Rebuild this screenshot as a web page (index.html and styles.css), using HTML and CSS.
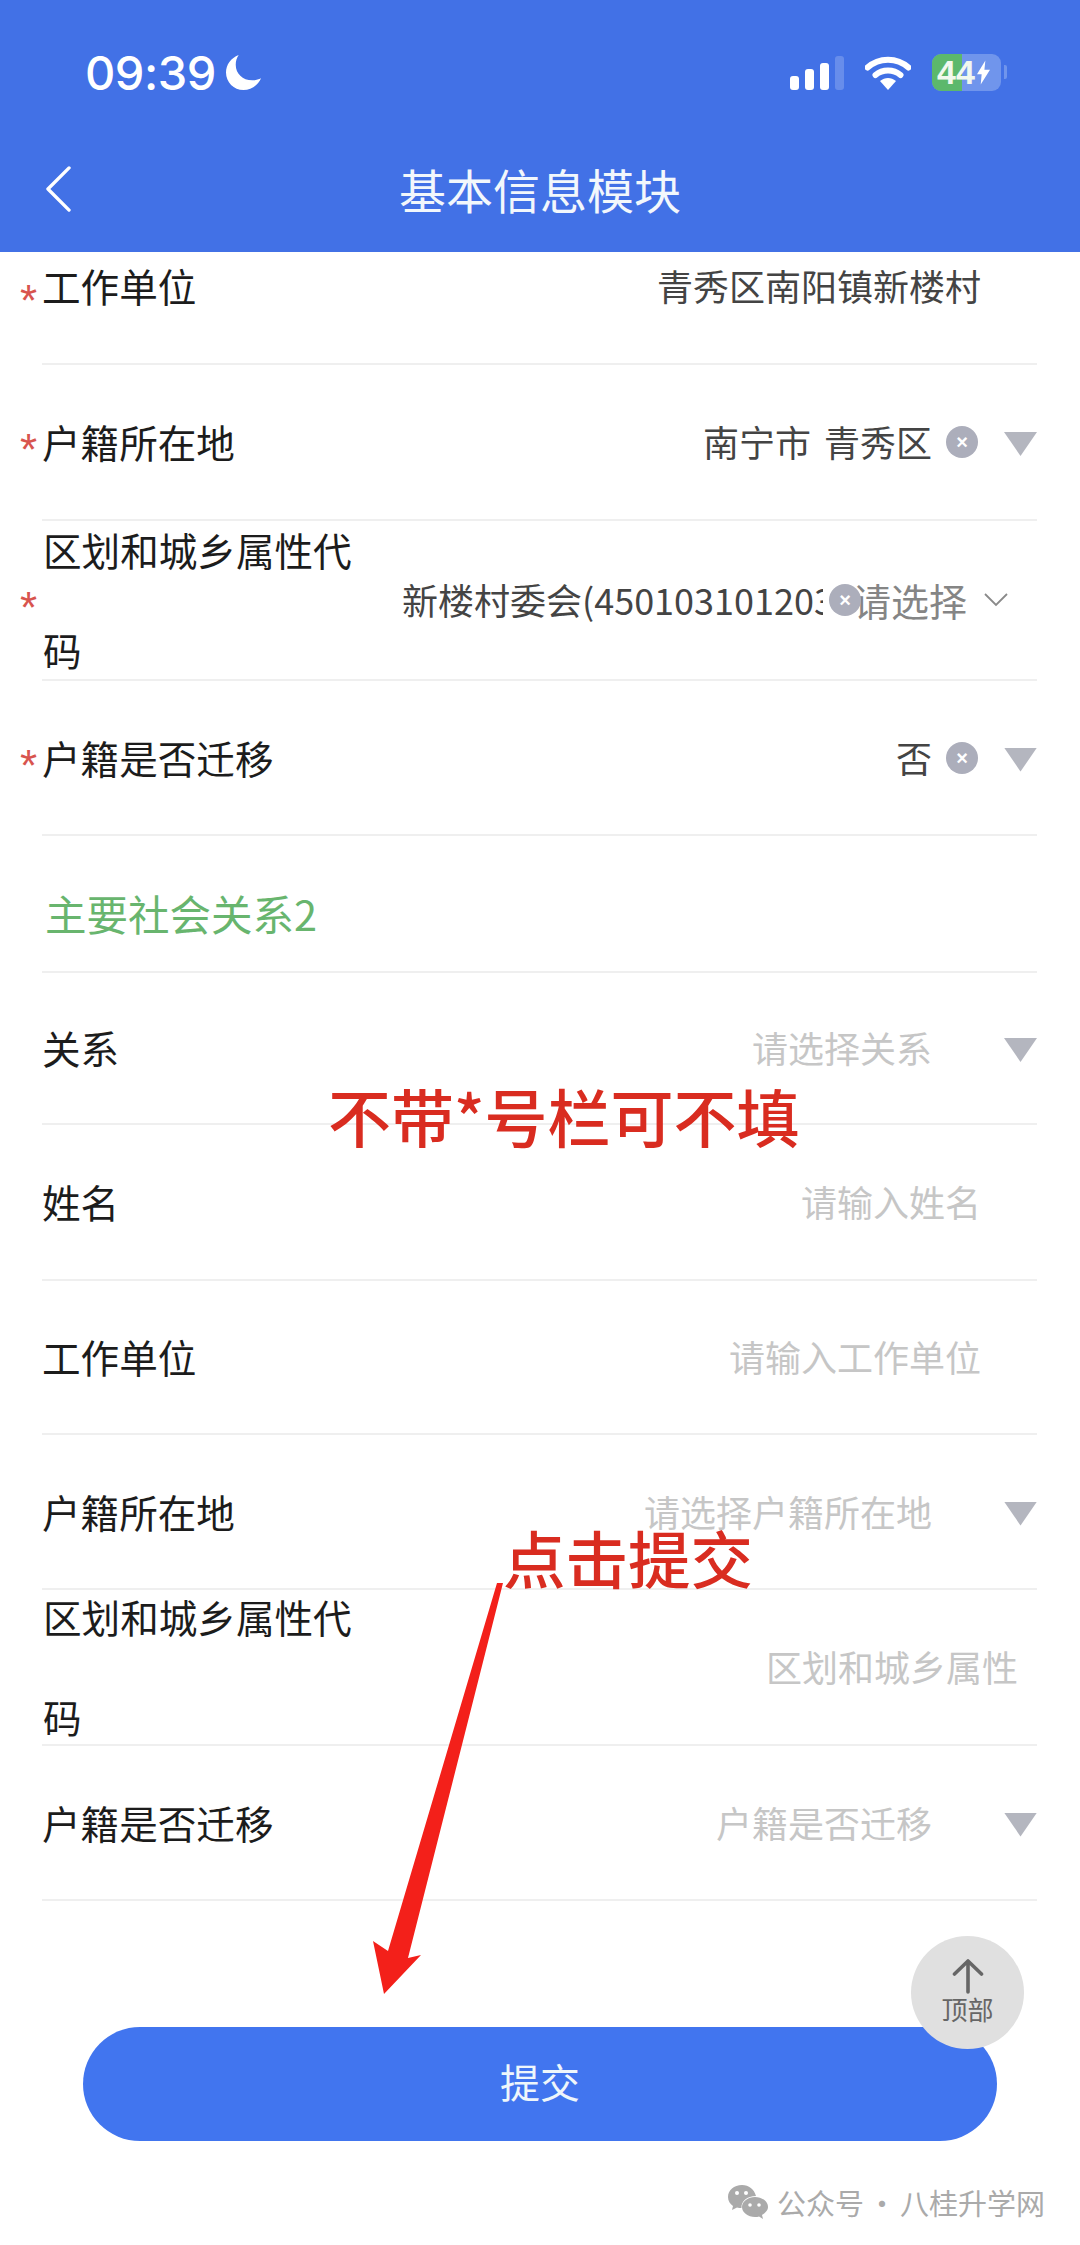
FILE: index.html
```html
<!DOCTYPE html>
<html lang="zh">
<head>
<meta charset="utf-8">
<title>基本信息模块</title>
<link rel="stylesheet" href="styles.css">
</head>
<body>
<div class="page">
  <header class="header">
    <div class="status">
      <div class="status-left">
        <span class="time">09:39</span>
        <svg class="moon" viewBox="0 0 38 38"><path d="M13 1C5 4 0 11 0 19c0 10 8 18 18 18 8 0 15-5 18-12-3 1.500-6 2-9 2C17 27 10 20 10 11c0-4 1-7 3-10z" fill="#fff"/></svg>
      </div>
      <div class="status-right">
        <svg class="signal" viewBox="0 0 54 34"><rect x="0" y="20" width="9" height="14" rx="3" fill="#fff"/><rect x="15" y="13" width="9" height="21" rx="3" fill="#fff"/><rect x="30" y="7" width="9" height="27" rx="3" fill="#fff"/><rect x="45" y="0" width="9" height="34" rx="3" fill="#fff" fill-opacity=".2"/></svg>
        <svg class="wifi" viewBox="0 0 46 34"><path d="M2.500 11.500C14 1 32 1 43.500 11.500" fill="none" stroke="#fff" stroke-width="6" stroke-linecap="round"/><path d="M10.500 19c7-6 18-6 25 0" fill="none" stroke="#fff" stroke-width="6" stroke-linecap="round"/><path d="M15 25c5-4 11-4 16 0l-8 9z" fill="#fff"/></svg>
        <div class="battery">
          <span class="battery-fill"></span>
          <span class="battery-text">44</span>
          <svg class="bolt" viewBox="0 0 14 26"><path d="M9 0 0 15h5l-1 11 10-16H8z" fill="#fff"/></svg>
        </div>
        <span class="battery-tip"></span>
      </div>
    </div>
    <nav class="nav">
      <svg class="back" viewBox="0 0 28 48"><path d="M25 2 3 24l22 22" fill="none" stroke="#fff" stroke-width="3.500" stroke-linecap="round" stroke-linejoin="round"/></svg>
      <h1 class="title">基本信息模块</h1>
      <span></span>
    </nav>
  </header>

  <main class="form">
    <div class="row row-first">
      <span class="star star-first">*</span>
      <div class="body body-first">
        <span class="label">工作单位</span>
        <span class="value value-plain">青秀区南阳镇新楼村</span>
      </div>
    </div>
    <div class="row row-156">
      <span class="star">*</span>
      <div class="body">
        <span class="label">户籍所在地</span>
        <span class="value">南宁市 青秀区</span>
        <span class="clear"><i class="clear-x">×</i></span>
        <span class="tri"></span>
      </div>
    </div>
    <div class="row row-160">
      <span class="star">*</span>
      <div class="body">
        <span class="label label-wrap">区划和城乡属性代码</span>
        <span class="value value-clip">新楼村委会(450103101203)</span>
        <span class="clear clear-over"><i class="clear-x">×</i></span>
        <span class="select-hint">请选择</span>
        <svg class="chevron" viewBox="0 0 24 14"><path d="M1 1l11 11L23 1" fill="none" stroke="#8a8a8a" stroke-width="1.800"/></svg>
      </div>
    </div>
    <div class="row row-155">
      <span class="star">*</span>
      <div class="body">
        <span class="label">户籍是否迁移</span>
        <span class="value">否</span>
        <span class="clear"><i class="clear-x">×</i></span>
        <span class="tri"></span>
      </div>
    </div>
    <div class="row row-section">
      <span class="star"></span>
      <div class="body body-section"><span class="section">主要社会关系2</span></div>
    </div>
    <div class="row row-152">
      <span class="star"></span>
      <div class="body">
        <span class="label">关系</span>
        <span class="value placeholder">请选择关系</span>
        <span class="tri tri-wide"></span>
      </div>
    </div>
    <div class="row row-156">
      <span class="star"></span>
      <div class="body">
        <span class="label">姓名</span>
        <span class="value value-plain placeholder">请输入姓名</span>
      </div>
    </div>
    <div class="row row-154">
      <span class="star"></span>
      <div class="body">
        <span class="label">工作单位</span>
        <span class="value value-plain placeholder">请输入工作单位</span>
      </div>
    </div>
    <div class="row row-155">
      <span class="star"></span>
      <div class="body">
        <span class="label">户籍所在地</span>
        <span class="value placeholder">请选择户籍所在地</span>
        <span class="tri tri-wide"></span>
      </div>
    </div>
    <div class="row row-156">
      <span class="star"></span>
      <div class="body">
        <span class="label label-wrap">区划和城乡属性代码</span>
        <span class="value value-near placeholder">区划和城乡属性</span>
      </div>
    </div>
    <div class="row row-155">
      <span class="star"></span>
      <div class="body">
        <span class="label">户籍是否迁移</span>
        <span class="value placeholder">户籍是否迁移</span>
        <span class="tri tri-wide"></span>
      </div>
    </div>
  </main>

  <div class="actions">
    <button class="submit" type="button">提交</button>
    <div class="to-top">
      <svg class="to-top-arrow" viewBox="0 0 32 36"><path d="M16 34V3M2.500 16 16 3l13.500 13" fill="none" stroke="#666" stroke-width="3.600" stroke-linecap="round" stroke-linejoin="round"/></svg>
      <span class="to-top-text">顶部</span>
    </div>
  </div>

  <div class="watermark">
    <svg class="wechat" viewBox="0 0 40 34"><path d="M14 0C6 0 0 5 0 12c0 4 2 7 5 9l-1 4 5-2.500c1.500.4 3 .6 4.500.6C13 16 19 11 28 11 26 4 21 0 14 0z" fill="#aaa"/><path d="M27 12c-7 0-13 4.500-13 10s6 10 13 10c1.500 0 3-.2 4-.6l4 2.600-1-4c3-2 6-4.500 6-8 0-5.500-6-10-13-10z" fill="#aaa"/><circle cx="9" cy="8" r="2" fill="#fff"/><circle cx="18" cy="8" r="2" fill="#fff"/><circle cx="22" cy="20" r="1.800" fill="#fff"/><circle cx="31" cy="20" r="1.800" fill="#fff"/></svg>
    <span class="watermark-text">公众号 · 八桂升学网</span>
  </div>

  <div class="note note-optional">不带*号栏可不填</div>
  <div class="note note-submit">点击提交</div>
  <svg class="pointer" viewBox="0 0 1080 2245"><path d="M497 1583 L503 1583 L408 1958 L421 1955 L384 1994 L373 1941 L388 1951 Z" fill="#f3201a"/></svg>
</div>
</body>
</html>
```
FILE: styles.css
```css
* { box-sizing: border-box; }
html, body { margin: 0; padding: 0; background: #fff; }
.page {
  position: relative;
  width: 1080px;
  height: 2245px;
  overflow: hidden;
  font-family: "Noto Sans CJK SC", "Noto Sans", sans-serif;
  background: #fff;
}
.header { height: 252px; background: #4271e6; color: #fff; display: flex; flex-direction: column; }
.status { height: 144px; display: flex; align-items: center; justify-content: space-between; padding: 0 73px 0 85px; }
.status-left { display: flex; align-items: center; gap: 10px; }
.time { font-family: Inter, "Liberation Sans", sans-serif; font-weight: 500; font-size: 47px; line-height: 1; letter-spacing: -.5px; }
.moon { width: 37px; height: 37px; }
.status-right { display: flex; align-items: center; }
.signal { width: 54px; height: 34px; margin-right: 21px; margin-top: 1px; }
.wifi { width: 46px; height: 34px; margin-right: 21px; margin-top: 1px; }
.battery { position: relative; width: 69px; height: 37px; border-radius: 9px; background: #7095ec; display: flex; align-items: center; padding-left: 5px; overflow: hidden; }
.battery-fill { position: absolute; left: 0; top: 0; bottom: 0; width: 30px; background: #5cb86c; }
.battery-text { position: relative; font-family: "Liberation Sans", sans-serif; font-weight: 700; font-size: 34px; line-height: 1; color: #f1f8ee; }
.bolt { position: relative; width: 13px; height: 25px; margin-left: 2px; }
.battery-tip { width: 3px; height: 14px; margin-left: 3px; background: #7095ec; border-radius: 0 2px 2px 0; }
.nav { height: 108px; padding: 0 0 18px 45px; display: grid; grid-template-columns: 1fr auto 1fr; align-items: center; }
.back { width: 27px; height: 46px; }
.title { margin: 0 45px 0 0; font-size: 47px; font-weight: 400; line-height: 1.2; color: #f2f7fc; }

.row { display: flex; align-items: stretch; }
.row-first { height: 113px; }
.row-156 { height: 156px; }
.row-160 { height: 160px; }
.row-155 { height: 155px; }
.row-154 { height: 154px; }
.row-152 { height: 152px; }
.row-section { height: 137px; }
.star { width: 42px; flex: none; padding: 14px 0 0 20px; display: flex; align-items: center; color: #d8544e; font-family: "Liberation Sans", sans-serif; font-size: 44px; line-height: 1; }
.star-first { padding-bottom: 30px; }
.body { flex: 1; min-width: 0; margin-right: 43px; display: flex; align-items: center; border-bottom: 2px solid #efefef; }
.body-first { padding-bottom: 43px; }
.body-section { padding: 20px 0 0 3px; }
.label { font-size: 38.600px; line-height: 100px; padding-bottom: 2px; color: #1c1c1c; white-space: nowrap; flex: none; }
.label-wrap { width: 322px; white-space: normal; margin-left: 1px; }
.section { font-size: 41.500px; line-height: 1.2; color: #68b56e; }
.value { margin-left: auto; font-size: 36px; line-height: 1.2; color: #444; white-space: nowrap; word-spacing: 5px; }
.value-plain { margin-right: 56px; }
.value-near { margin-right: 19px; }
.placeholder { color: #c6c6c6; }
.clear { flex: none; width: 32px; height: 32px; margin-left: 14px; border-radius: 50%; background: #acaebb; display: flex; align-items: center; justify-content: center; position: relative; z-index: 1; }
.clear-x { font-style: normal; font-family: "Liberation Sans", sans-serif; font-weight: 700; font-size: 20px; line-height: 1; color: #fff; }
.tri { flex: none; width: 33px; height: 24px; margin: 4px 0 0 26px; background: #b4b6bf; clip-path: polygon(0 0, 100% 0, 50% 100%); }
.tri-wide { margin-left: 72px; }
.value-clip { margin-left: 37px; width: 421px; overflow: hidden; }
.clear-over { margin-left: 6px; }
.select-hint { flex: none; margin-left: -8px; font-size: 38px; line-height: 1.2; color: #858585; }
.chevron { flex: none; width: 24px; height: 14px; margin-left: 17px; }

.actions { position: relative; padding: 126px 83px 0; }
.submit { display: block; width: 100%; height: 114px; border: 0; padding: 0 0 6px; border-radius: 57px; background: #4175ef; color: #eef6fb; font: inherit; font-size: 40px; line-height: 1; }
.to-top { position: absolute; left: 911px; top: 35px; width: 113px; height: 113px; border-radius: 50%; background: #e0e0e0; display: flex; flex-direction: column; align-items: center; padding-top: 22px; }
.to-top-arrow { width: 32px; height: 36px; }
.to-top-text { font-size: 26px; line-height: 1; margin-top: 2px; color: #666; }

.watermark { display: flex; align-items: center; justify-content: flex-end; gap: 9px; padding: 44px 35px 0 0; }
.wechat { width: 40px; height: 34px; }
.watermark-text { font-size: 29px; line-height: 1.2; color: #aaa; white-space: nowrap; word-spacing: -3px; }

.note { position: absolute; font-weight: 500; line-height: 1; color: #d92c20; white-space: nowrap; }
.note-optional { left: 328px; top: 1083px; font-size: 63px; }
.note-submit { left: 503px; top: 1526px; font-size: 62.500px; }
.pointer { position: absolute; left: 0; top: 0; width: 1080px; height: 2245px; pointer-events: none; }
```
